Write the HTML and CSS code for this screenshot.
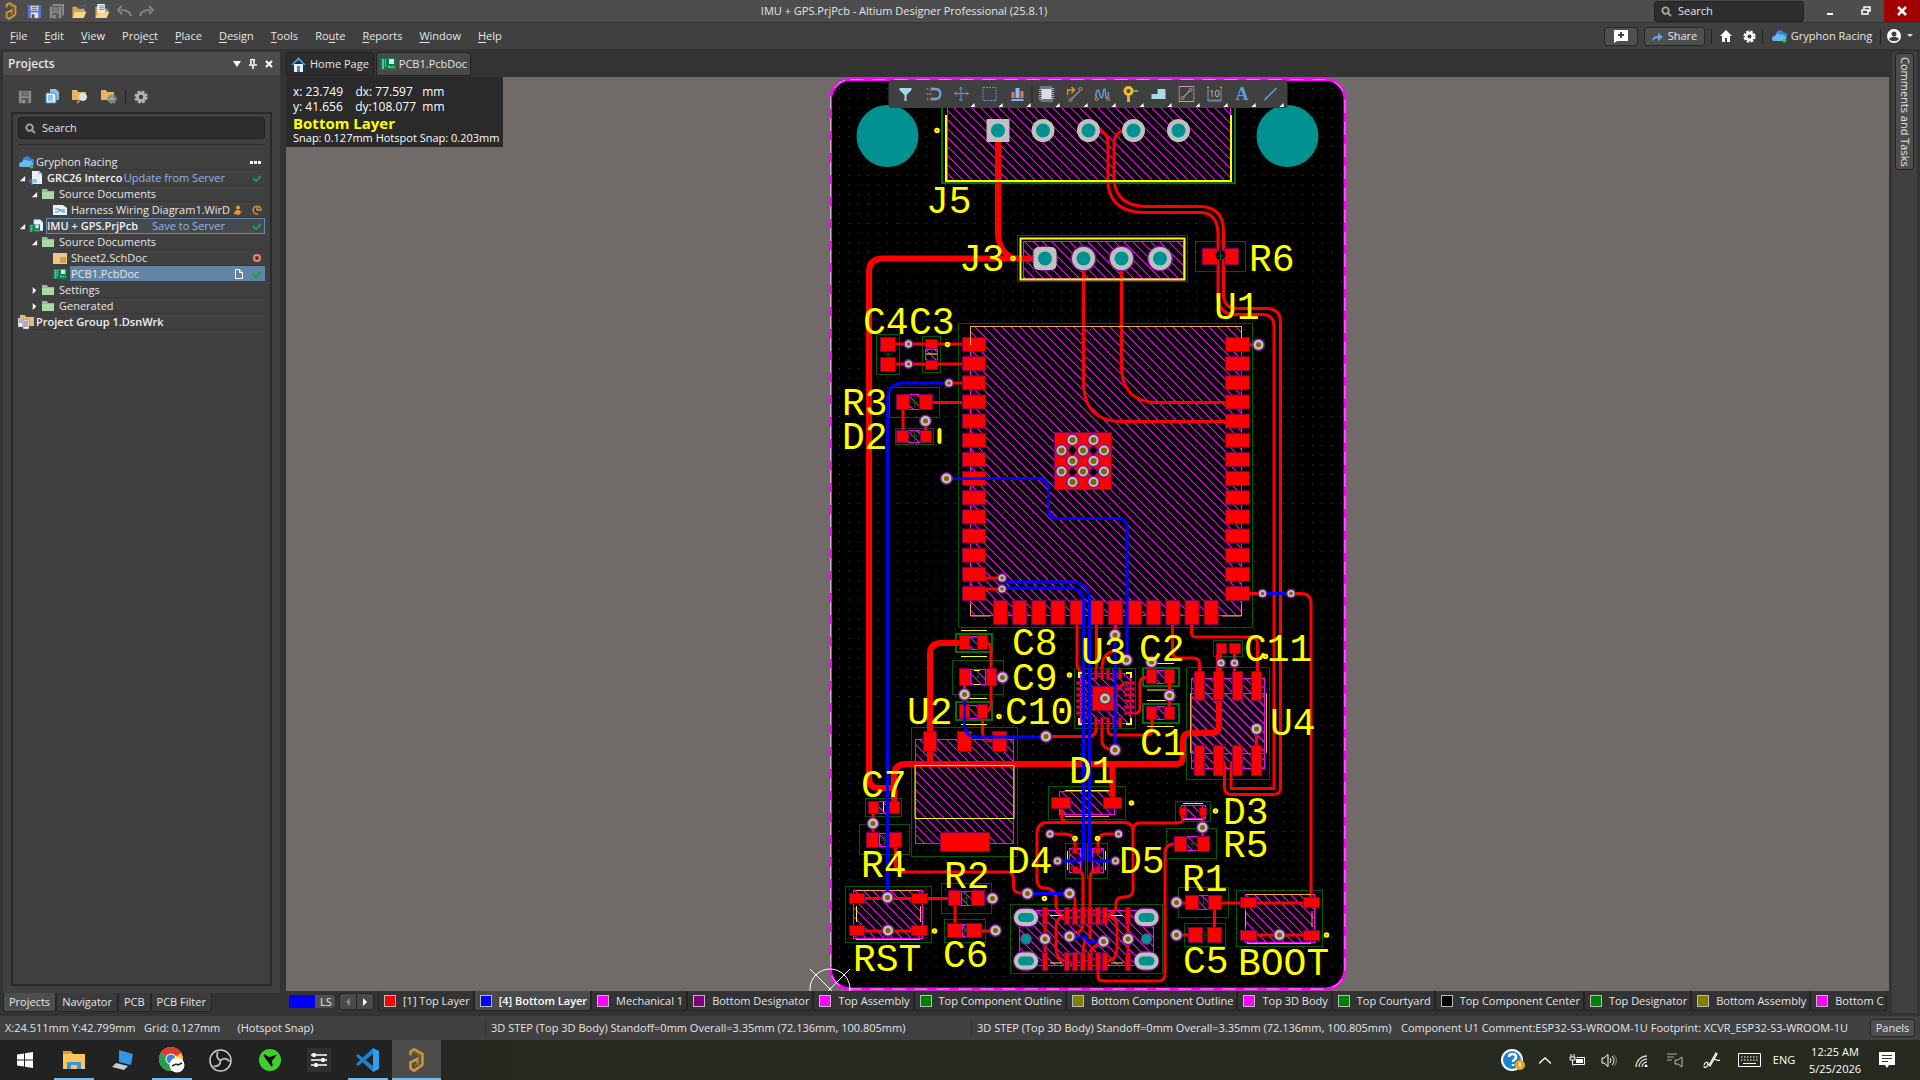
FILE: index.html
```html
<!DOCTYPE html>
<html lang="en">
<head>
  <meta charset="UTF-8">
  <meta name="viewport" content="width=device-width, initial-scale=1.0">
  <title>IMU + GPS.PrjPcb - Altium Designer</title>
  <link rel="stylesheet" href="styles.css">
</head>
<body>
  <!-- shared icons -->
  <svg class="defs" width="0" height="0">
    <symbol id="i-altium" viewBox="0 0 16 20"><path d="M3 6V3l3-2 7 4v9l-7 5-3-2v-5l6-3v5" fill="none" stroke="#c9963f" stroke-width="2.200"/><path d="M6 3l4 3v6l-4 3" fill="none" stroke="#8d6528" stroke-width="1.200"/></symbol>
    <symbol id="i-save" viewBox="0 0 16 16"><path d="M1 1h14v14H1z" fill="currentColor"/><path d="M4 2h8v5H4z" fill="#e9eef5"/><path d="M4 9h8v6H4z" fill="#dfe3ea"/><path d="M5 3h6v1H5zM5 5h6v1H5zM5 11h3v4H5z" fill="#555"/></symbol>
    <symbol id="i-save-off" viewBox="0 0 16 16"><path d="M1 1h14v14H1z" fill="#8b8b8b"/><path d="M4 2h8v5H4zM4 9h8v6H4z" fill="#555"/><path d="M5 3h6v1H5zM5 5h6v1H5zM5 11h3v4H5z" fill="#999"/></symbol>
    <symbol id="i-folder" viewBox="0 0 16 16"><path d="M1 3h5l1 2h7v3H5l-4 7z" fill="#d5a24e"/><path d="M4 8h12l-3 7H1z" fill="#fbd38c"/></symbol>
    <symbol id="i-green" viewBox="0 0 14 12"><path d="M1 1h5l1 2h6v8H1z" fill="#8fc48f"/><path d="M1 4h12v7H1z" fill="#a9d8a7"/></symbol>
    <symbol id="i-cloud" viewBox="0 0 16 14"><path d="M5 7a4 4 0 018-3 3 3 0 013 5l-2 2H7z" fill="#2c86dd"/><path d="M1 10a3 3 0 013-3 3.500 3.500 0 016-1 3 3 0 013 6H3a2 2 0 01-2-2z" fill="#70b7f0"/><circle cx="13.500" cy="11.500" r="2" fill="#37c83b"/></symbol>
    <symbol id="i-pcb" viewBox="0 0 16 12"><path d="M0 0h16v12H0z" fill="#0c7a4a"/><path d="M2 2h2M2 4h2M2 6h2M2 8h2M2 10h2M5 2h1M5 4h1M5 6h1M5 8h1" stroke="#d9f3e3"/><path d="M9 1h5v5H9z" fill="#d8e6ef"/><path d="M8 8h1v2M10 8v2M12 8v2M14 8v2" stroke="#7fe0a0" fill="none"/></symbol>
    <symbol id="i-doc" viewBox="0 0 14 14"><path d="M3 0h7l3 3v10H3z" fill="#e9f1f8"/><path d="M10 0v3h3" fill="none" stroke="#9fb9cf"/><path d="M1 8v4M3 8v6M5 8v4M7 8v4" stroke="#4c95d0"/></symbol>
    <symbol id="i-search" viewBox="0 0 12 12"><circle cx="5" cy="5" r="3.500" fill="none" stroke="#aaa" stroke-width="2"/><path d="M8 8l3 3" stroke="#aaa" stroke-width="2"/></symbol>
    <symbol id="i-gear" viewBox="0 0 14 14"><circle cx="7" cy="7" r="5" fill="none" stroke="currentColor" stroke-width="3.200" stroke-dasharray="2.600 1.330"/><circle cx="7" cy="7" r="3.600" fill="none" stroke="currentColor" stroke-width="2.800"/></symbol>
    <symbol id="i-check" viewBox="0 0 10 10"><path d="M1 5l3 3 5-5" fill="none" stroke="#17a04b" stroke-width="2"/></symbol>
    <symbol id="i-open" viewBox="0 0 8 8"><path d="M7 1v6H1z" fill="#fff"/></symbol>
    <symbol id="i-shut" viewBox="0 0 8 8"><path d="M2 0l4 4-4 4z" fill="#fff"/></symbol>
  </svg>

  <header class="titlebar">
    <div class="quick">
      <svg width="14" height="18"><use href="#i-altium"/></svg>
      <button aria-label="Save"><svg class="blue" width="15" height="15"><use href="#i-save"/></svg></button>
      <button aria-label="Save all"><svg width="15" height="15" viewBox="0 0 16 16"><path d="M4 0h12v12h-2V2H4z" fill="#8b8b8b"/><use href="#i-save-off" y="2" width="14" height="14"/></svg></button>
      <button aria-label="Open"><svg width="16" height="15" viewBox="0 0 16 16"><use href="#i-folder" width="16" height="16"/><path d="M9 2q3-2 6 1v-3" fill="none" stroke="#2f74b5"/></svg></button>
      <button aria-label="Open project"><svg width="16" height="15" viewBox="0 0 16 16"><use href="#i-folder" width="16" height="16"/><path d="M3 0h8v9H3z" fill="#eef5fb"/><path d="M5 2h5M5 4h5M5 6h5" stroke="#3b86c0"/><path d="M11 2q3-2 4 1" fill="none" stroke="#2f74b5"/></svg></button>
      <button aria-label="Undo"><svg width="15" height="12" viewBox="0 0 15 12"><path d="M14 11c-1-5-5-6-10-6M5 1L1 5l4 4" fill="none" stroke="#858585" stroke-width="2"/></svg></button>
      <button aria-label="Redo"><svg width="15" height="12" viewBox="0 0 15 12"><path d="M1 11c1-5 5-6 10-6M10 1l4 4-4 4" fill="none" stroke="#858585" stroke-width="2"/></svg></button>
    </div>
    <h1>IMU + GPS.PrjPcb - Altium Designer Professional (25.8.1)</h1>
    <label class="search title-search"><svg width="11" height="11"><use href="#i-search"/></svg><input type="text" placeholder="Search" aria-label="Search commands"></label>
    <div class="window-btns">
      <button aria-label="Minimize"><svg width="10" height="10"><path d="M2 7h6v2H2z" fill="#fff"/></svg></button>
      <button aria-label="Restore"><svg width="10" height="10" viewBox="0 0 10 10"><path d="M3 3V1h6v4H7M1 4h6v4H1z" fill="none" stroke="#fff" stroke-width="1.500"/></svg></button>
      <button class="close" aria-label="Close"><svg width="10" height="10" viewBox="0 0 10 10"><path d="M1 1l8 8M9 1L1 9" stroke="#fff" stroke-width="2.500"/></svg></button>
    </div>
  </header>

  <nav class="menubar">
    <div class="menus">
      <button><u>F</u>ile</button><button><u>E</u>dit</button><button><u>V</u>iew</button><button>Proje<u>c</u>t</button><button><u>P</u>lace</button><button><u>D</u>esign</button><button><u>T</u>ools</button><button>Ro<u>u</u>te</button><button><u>R</u>eports</button><button><u>W</u>indow</button><button><u>H</u>elp</button>
    </div>
    <div class="account">
      <button class="boxed note" aria-label="Add comment"><svg width="16" height="13" viewBox="0 0 16 13"><path d="M1 0h14v11H4l-3 2z" fill="#fff"/><path d="M8 2v6M5 5h6" stroke="#444" stroke-width="2"/></svg></button>
      <button class="boxed share"><svg width="12" height="9" viewBox="0 0 12 9"><path d="M0 9c1-4 3-5 6-5V1l5 4-5 4V6C4 6 2 7 0 9z" fill="#64a7ea"/></svg>Share</button>
      <i></i>
      <button class="home" aria-label="Home"><svg width="12" height="12" viewBox="0 0 12 12"><path d="M6 0l6 6h-2v6H7V8H5v4H2V6H0z" fill="#fff"/></svg></button>
      <button aria-label="Settings"><svg class="white" width="13" height="13"><use href="#i-gear"/></svg></button>
      <i></i>
      <button class="server"><svg width="16" height="14"><use href="#i-cloud"/></svg>Gryphon Racing</button>
      <i></i>
      <button class="user" aria-label="User"><svg width="14" height="14" viewBox="0 0 14 14"><circle cx="7" cy="7" r="7" fill="#fff"/><circle cx="7" cy="5" r="2.500" fill="#404040"/><path d="M2 10c2-3 8-3 10 0-2 3-8 3-10 0z" fill="#404040"/></svg><svg width="6" height="4"><path d="M0 0h6L3 3z" fill="#ddd"/></svg></button>
    </div>
  </nav>

  <main class="workspace">
    <aside class="side">
      <section class="panel">
        <header>
          <h2>Projects</h2>
          <button aria-label="Panel menu"><svg width="8" height="8"><path d="M0 1h8L4 7z" fill="#fff"/></svg></button>
          <button aria-label="Pin"><svg width="8" height="10" viewBox="0 0 8 10"><path d="M2 0v5M5 0v5M0 6h8M4 6v4M2 .500h4" stroke="#fff" stroke-width="1.500"/></svg></button>
          <button aria-label="Close panel"><svg width="8" height="8" viewBox="0 0 8 8"><path d="M1 1l6 6M7 1L1 7" stroke="#fff" stroke-width="2"/></svg></button>
        </header>
        <div class="panel-tools">
          <button aria-label="Save project"><svg width="14" height="14"><use href="#i-save-off"/></svg></button>
          <button aria-label="Compile"><svg width="14" height="15" viewBox="0 0 14 15"><path d="M5 0h6l3 3v8H5z" fill="#8bbfe8"/><path d="M1 4h8l2 2v8H1z" fill="#e3f0fa" stroke="#3b88c6"/><path d="M3 7h5M3 9h5M3 11h5" stroke="#4b98d0"/></svg></button>
          <button aria-label="Explore"><svg width="16" height="15" viewBox="0 0 16 15"><path d="M0 1h5l1 2h8v8H0z" fill="#e5b564"/><circle cx="11" cy="8" r="3.500" fill="#cfe4f3" stroke="#e7eef5"/><path d="M8 11l-3 3" stroke="#c58a3c" stroke-width="2"/></svg></button>
          <button aria-label="Project options"><svg width="16" height="15" viewBox="0 0 16 15"><path d="M0 1h5l1 2h7v8H0z" fill="#e5b564"/><g class="grey"><use href="#i-gear" x="6" y="5" width="10" height="10"/></g></svg></button>
          <i></i>
          <button aria-label="Panel settings"><svg class="lgrey" width="14" height="14"><use href="#i-gear"/></svg></button>
        </div>
        <div class="tree-box">
          <label class="search"><svg width="11" height="11"><use href="#i-search"/></svg><input type="text" placeholder="Search" aria-label="Search projects"></label>
          <hr>
          <ul class="tree">
            <li><svg class="root" width="16" height="14"><use href="#i-cloud"/></svg><span class="cell">Gryphon Racing<svg class="dots" width="12" height="4"><path d="M0 1h3v3H0zM4 1h3v3H4zM8 1h3v3H8z" fill="#fff"/></svg></span></li>
            <li class="l1"><svg width="7" height="7"><use href="#i-open"/></svg><svg class="ico" width="14" height="14"><use href="#i-doc"/></svg><span class="cell"><b>GRC26 Interco</b><a href="#">Update from Server</a><svg class="st" width="10" height="10"><use href="#i-check"/></svg></span></li>
            <li class="l2"><svg width="7" height="7"><use href="#i-open"/></svg><svg class="ico" width="14" height="12"><use href="#i-green"/></svg><span class="cell">Source Documents</span></li>
            <li class="l3"><svg class="ico" width="14" height="10" viewBox="0 0 14 10"><path d="M0 0h10l4 3v7H0z" fill="#eaf3fa"/><path d="M2 4h4l3 3h3M2 7h3l2-2h5" stroke="#3c8fd0" fill="none"/></svg><span class="cell"><span class="name">Harness Wiring Diagram1.WirD</span><svg class="st" width="10" height="10" viewBox="0 0 10 10"><circle cx="4" cy="2.500" r="2" fill="#e39a45"/><path d="M0 9c0-5 6-5 7-2l2-2-4 5z" fill="#e39a45"/></svg><svg class="st" width="10" height="10" viewBox="0 0 10 10"><path d="M9 6a4 4 0 10-3 3M5 2v3h3" fill="none" stroke="#d99a3d" stroke-width="1.300"/></svg></span></li>
            <li class="l1 current"><svg width="7" height="7"><use href="#i-open"/></svg><svg class="ico" width="14" height="14" viewBox="0 0 15 14"><path d="M5 0h7l3 3v9H5z" fill="#e9f1f8"/><use href="#i-pcb" y="5" width="12" height="9"/></svg><span class="cell"><b>IMU + GPS.PrjPcb</b><a href="#">Save to Server</a><svg class="st" width="10" height="10"><use href="#i-check"/></svg></span></li>
            <li class="l2"><svg width="7" height="7"><use href="#i-open"/></svg><svg class="ico" width="14" height="12"><use href="#i-green"/></svg><span class="cell">Source Documents</span></li>
            <li class="l3"><svg class="ico" width="14" height="11" viewBox="0 0 14 11"><path d="M0 0h14v11H0z" fill="#eec983"/><path d="M7 5h6M7 7h6M7 9h6" stroke="#a8782c"/></svg><span class="cell"><span class="name">Sheet2.SchDoc</span><svg class="st" width="10" height="10"><circle cx="5" cy="5" r="3" fill="none" stroke="#f4806c" stroke-width="2"/></svg></span></li>
            <li class="l3 selected"><svg class="ico" width="14" height="12"><use href="#i-pcb"/></svg><span class="cell"><span class="name">PCB1.PcbDoc</span><svg class="st" width="10" height="10" viewBox="0 0 10 10"><path d="M1.500 .500h4l3 3v6h-7zM5.500 .500v3h3" fill="none" stroke="#fff"/></svg><svg class="st" width="10" height="10"><use href="#i-check"/></svg></span></li>
            <li class="l2"><svg width="7" height="7"><use href="#i-shut"/></svg><svg class="ico" width="14" height="12"><use href="#i-green"/></svg><span class="cell">Settings</span></li>
            <li class="l2"><svg width="7" height="7"><use href="#i-shut"/></svg><svg class="ico" width="14" height="12"><use href="#i-green"/></svg><span class="cell">Generated</span></li>
            <li><svg class="root" width="16" height="14" viewBox="0 0 16 14"><path d="M2 0h5l1 2h8v9H2z" fill="#e8bb6c"/><path d="M0 3h5v9H0zM5 5h6v9H5z" fill="#eef3f8" stroke="#777" stroke-width=".500"/><path d="M6 7h4M6 9h4M6 11h4M1 5h3M1 7h3" stroke="#666"/></svg><span class="cell"><b>Project Group 1.DsnWrk</b></span></li>
          </ul>
        </div>
      </section>
      <div class="panel-tabs"><button class="on">Projects</button><button>Navigator</button><button>PCB</button><button>PCB Filter</button></div>
    </aside>

    <section class="editor">
      <div class="doc-tabs">
        <button><svg width="15" height="15" viewBox="0 0 15 15"><path d="M3 7h9v8H3z" fill="#e8f2fb"/><path d="M7.500 0L15 8h-2L7.500 3 2 8H0z" fill="#3d9bea"/><path d="M6 9h3v6H6z" fill="#3d86c8"/></svg>Home Page</button>
        <button class="on"><svg width="16" height="12"><use href="#i-pcb"/></svg>PCB1.PcbDoc</button>
      </div>

      <div class="canvas">
        <svg class="board" width="576" height="914" viewBox="800 77 576 914">
          <defs>
            <pattern id="dots" x="839" y="88" width="9.650" height="9.650" patternUnits="userSpaceOnUse"><rect width="1" height="1" fill="#505050"/></pattern>
            <pattern id="hatch" width="9" height="9" patternUnits="userSpaceOnUse"><path d="M-1-1l11 11M-1 8l2 2M8-1l2 2" stroke="#f0f" stroke-width="1.100"/></pattern>
          </defs>
          <rect x="830.500" y="79.500" width="514.500" height="909.500" rx="20"/>
          <g class="body" id="bodies"></g>
          <rect x="830.500" y="79.500" width="514.500" height="909.500" rx="20" fill="url(#dots)"/>
          <rect class="edge" x="830.500" y="79.500" width="514.500" height="909.500" rx="20"/>
          <rect class="edge-dash" x="830.500" y="79.500" width="514.500" height="909.500" rx="20"/>
          <g class="drill"><ellipse cx="887.500" cy="136" rx="31" ry="31"/><ellipse cx="1287.500" cy="136" rx="31" ry="31"/></g>

          <g class="yard" id="yards"></g>
          <g class="yard heavy"><path d="M942 95v88h293V95"/><rect x="956" y="634" width="36" height="18"/><rect x="956" y="702" width="36" height="18"/><rect x="1143" y="668" width="36" height="18"/><rect x="1143" y="704" width="36" height="19"/></g>

          <g class="cu thick">
            <path d="M998 130v105q2 20 18 23.500M1045 258.500H883q-14 0-14 14V778q0 10 10 10h15M894 806v-30q0-12 12-12h270q7 0 7-7v-16q0-8 8-8h20q8 0 8-8v-75M930 764V654q0-11 11-11h25M1112.500 764v38"/>
          </g>
          <g class="cu">
            <path d="M1099 131q9 2 9 12v41q3 28 36 28.500h56q17 0 18 20v16q-4 6 0 12v38q2 16 17 16h27q12 0 12 12v462h-43v-22q0-4 3-5"/>
            <path d="M1123 131q-9 2-9 12v38q3 24 30 25.500h57q22 1 22.500 24v18q4 6 0 12v36q2 12 13 12h30q14 0 14 14v465q0 7-7 7h-42q-7 0-7-7v-22q0-4-3-5"/>
            <path d="M1083.500 268v118q2 34 36 35.500h106M1121.500 268v102q2 31 34 32.500h70M888 344h74M888 364h74M949 383h15M932 402.500h30M903 402v30M925.500 421v12M985 578h17M985 589h17M1250 593.500h12M1291 593.500h10q10 0 10 10V900M1250 344.700h8"/>
            <path d="M1077 624v38q0 8 5 11M1096.500 624v48M1115.500 624v11M1172.500 624v27q0 7 7 7h14q6 0 6 6v12M1191.500 624v8q0 5 5 5h54q7 0 7 7v30M988 643q3 1 3 9v52q0 6-5 8M964.500 686v9M982.500 718v14q0 9 12 9M996 677h7M1046 736.500h42q8 0 8-8v-6"/>
            <path d="M1127 660q-3-8-13-9-12 2-12 18M1102 727v15q1 7 12 8M1108 727v3q0 5 5 5h34q5 0 5-6v-12M1134 713.500q6 0 6-6V682q0-5 8-5M1117 690q3-5 9-6M1151.500 662v10M1169.500 680v32M1234.500 652v22M1256.500 729v18"/>
            <path d="M873 806v36M895.500 846v19q0 7 7 7h104q7 0 7 7v7q0 7 7 7h8M1069 893q6 2 6 8v12M857 898.500h100M857 931h60M955 900v28M981 931h14M1050 834h15q10 0 10 10v6M1118 834h-12q-8 0-8 10v6"/>
            <path d="M1061.500 806v10q0 6 6 6.500M1183 814v4q0 5-6 5h-37q-7 0-7 8M1048 822.500h76q9 0 9 9V890q0 7-9 7t-8 8-8 10M1048 822.500q-11 0-11 11V880q0 8 8 8t11 8v10q2 8 9 10M1072 868q11 2 11 10v45q0 9-8 10M1101 868q-11 2-11 10v60"/>
            <path d="M1065 916q-9 1-9 12v20q0 11 9 13M1107 916q10 1 10 12v20q0 11-9 13M1045 914v50M1128 914v50M1090 956q0-11 13-12M1083 956q0-9 2-16M1098 970v6q0 5 6 5h54q7 0 7-7V852q0-7 8-8h5M1202.500 812v30M1214.500 903v30M1220 903h91M1188 935h-12M1186 903h-10M1246 935h70"/>
          </g>
          <g class="pad" id="pads"></g>
          <g class="gap"><path d="M1068 450l4-5 5 5-5 6zM1089 450l4-5 5 5-5 6zM1068 472l4-5 5 5-5 6zM1089 472l4-5 5 5-5 6z"/><circle cx="1220.500" cy="255" r="5"/></g>
          <g class="yard" id="centers"></g>

          <g class="silk">
            <path d="M946 115v66h285v-66" class="w2"/><rect class="w2" x="1020.500" y="238.500" width="164" height="41"/>
            <path d="M961 630.500h26M961 656.500h26M961 698.500h26M961 724.500h26M974 670.500h6M974 684.500h6M926 354h11M915 765.500h99v53h-99zM883.500 802v10M1155 663.500h19M1147 690h27M1147 700.500h27M1147 726.500h27M1183 803.500h20M1065 790.500h44M1067.500 851v19M1105.500 851v19M856.500 906v16M1050 915.500h12M1050 963h12M1111 915.500h12M1111 963h12"/>
            <path class="w2" d="M1079 678v-5h5M1126 673h5v5M1079 718v6h5M1126 724h5v-6"/>
            <path d="M939.500 430v12" class="w4"/>
          </g>
          <g class="orange"><path d="M970.500 345V326.500h271V338M970.500 604v12h20M1222 616h19.500v-12M856 890.500h64M856 939.500h64M920.500 906v16M1245.500 911v16M1312 911v16M1247 894.500h64M1247 943.500h64M1065 816.500h44M1183 819.500h20M1190.500 693v60M1266.500 693v60"/></g>

          <g class="cu blue">
            <path d="M949 383h-46q-15 1-15.500 15v499M946 478.500h92q10 0 10.500 10V509q0 9.500 10 9.500h59q9.500 0 9.500 9.500v132M1262 593.500h29M1002 579l5 3h66q15 1 16.500 16v262M1002 588h69q12 1 12.500 13v259"/>
            <path d="M964.500 695v31q1 10 10 11h72M1115 635v115M1027 893.500h42M1058 861h18q7-1 7.500-8M1115 861h-18q-7-1-7.500-8M1069 937h16l3 5h15"/>
          </g>
          <g id="vias"></g>
          <g id="marks" class="mark"></g>
          <g class="refdes">
            <text x="926" y="213">J5</text><text x="959" y="271">J3</text><text x="1249" y="271">R6</text><text x="1214" y="319">U1</text>
            <text x="863" y="334">C4</text><text x="909" y="334">C3</text><text x="842" y="415">R3</text><text x="842" y="449">D2</text>
            <text x="1012" y="655">C8</text><text x="1012" y="690">C9</text><text x="1005" y="724">C10</text><text x="907" y="724">U2</text>
            <text x="1081" y="664">U3</text><text x="1139" y="661">C2</text><text x="1244" y="661">C11</text><text x="1270" y="735">U4</text>
            <text x="1140" y="755">C1</text><text x="1069" y="783">D1</text><text x="861" y="797">C7</text><text x="861" y="877">R4</text>
            <text x="944" y="888">R2</text><text x="1007" y="873">D4</text><text x="1119" y="873">D5</text><text x="1223" y="824">D3</text>
            <text x="1223" y="857">R5</text><text x="1182" y="891">R1</text><text x="1183" y="973">C5</text><text x="1238" y="975">BOOT</text>
            <text x="853" y="971">RST</text><text x="943" y="967">C6</text>
          </g>
          <g class="origin"><circle cx="830" cy="989" r="20"/><path d="M810 969l40 40M850 969l-40 40"/></g>
        </svg>

        <div class="hud">
          <p>x: 23.749    dx: 77.597   mm</p>
          <p>y: 41.656    dy:108.077  mm</p>
          <strong>Bottom Layer</strong>
          <small>Snap: 0.127mm Hotspot Snap: 0.203mm</small>
        </div>

        <div class="toolbar">
          <button aria-label="Filter"><svg viewBox="0 0 16 16"><path d="M2 2h12v2l-5 5v6H7V9L2 4z" fill="#a9d8e4"/></svg></button>
          <button aria-label="Snap"><svg viewBox="0 0 16 16"><path d="M6 3h4a5 5 0 010 10H6" fill="none" stroke="#6fa5e0" stroke-width="2.500"/><path d="M5 3h2M5 13h2" stroke="#e06a6a" stroke-width="3"/><path d="M1 3h2M1 8h2M4 8h2M1 13h2" stroke="#aaa"/></svg></button>
          <button class="more" aria-label="Move"><svg viewBox="0 0 16 16"><path d="M7.500 1v14M1 7.500h14M6 3l1.500-2L9 3M6 13l1.500 2L9 13M3 6L1 7.500 3 9M13 6l2 1.500L13 9" fill="none" stroke="#5b9bd8"/></svg></button>
          <button class="more" aria-label="Select"><svg viewBox="0 0 16 16"><path d="M1.500 1.500h13v13h-13z" fill="none" stroke="#5b9bd8" stroke-dasharray="2 1"/></svg></button>
          <button class="more" aria-label="Align"><svg viewBox="0 0 16 16"><path d="M2 6h3v6H2zM11 5h3v7h-3z" fill="#d77"/><path d="M6 2h4v10H6z" fill="#8bc0ee"/><path d="M2 14h12" stroke="#7db7ea" stroke-width="2"/></svg></button>
          <i></i>
          <button class="more" aria-label="Component"><svg viewBox="0 0 16 16"><path d="M2 2h12v12H2z" fill="none" stroke="#a7a7c8" stroke-width="4" stroke-dasharray="1 1"/><path d="M3 3h10v10H3z" fill="#dcdce6"/></svg></button>
          <button class="more" aria-label="Route"><svg viewBox="0 0 16 16"><path d="M1 9V4h6M5 1l3 3-3 3" fill="none" stroke="#d9982c" stroke-width="1.500"/><path d="M5 13l8-8" stroke="#6f9cc8" stroke-width="1.500"/><circle cx="4" cy="14" r="1.500" fill="none" stroke="#d9982c"/><circle cx="14" cy="3" r="1.500" fill="none" stroke="#d9982c"/></svg></button>
          <button class="more" aria-label="Tune length"><svg viewBox="0 0 16 16"><path d="M2 12C0 7 3 4 4 4s1 8 3 8 1-9 3-9 0 9 2 9 2-3 2-6" fill="none" stroke="#6f9cc8" stroke-width="1.500"/><circle cx="2" cy="13" r="1.500" fill="none" stroke="#d9982c"/><circle cx="14" cy="13" r="1.500" fill="none" stroke="#d9982c"/></svg></button>
          <button class="more" aria-label="Via"><svg viewBox="0 0 16 16"><path d="M8 5h8" stroke="#4cb848" stroke-width="2"/><circle cx="6" cy="5" r="3.500" fill="none" stroke="#f3bd2e" stroke-width="3"/><path d="M6 9v7" stroke="#e9a735" stroke-width="3"/></svg></button>
          <button class="more" aria-label="Polygon"><svg viewBox="0 0 16 16"><path d="M1 8h6V3h8v10H1z" fill="#a9dbe8"/></svg></button>
          <button class="more" aria-label="Region"><svg viewBox="0 0 16 16"><path d="M.500 .500h15v15H.500z" fill="none" stroke="#d78fd7"/><path d="M5 11l6-6" stroke="#6f9cc8" stroke-width="1.500"/><circle cx="4" cy="12" r="1.500" fill="none" stroke="#d9982c"/><circle cx="12" cy="4" r="1.500" fill="none" stroke="#d9982c"/></svg></button>
          <button class="more" aria-label="Dimension"><svg viewBox="0 0 16 16"><path d="M1.500 3v12h13V3M2 14h12" fill="none" stroke="#8193b8"/><circle cx="1.500" cy="1.500" r="1" fill="#d9982c"/><circle cx="14.500" cy="1.500" r="1" fill="#d9982c"/><text x="8" y="11" font-size="9" text-anchor="middle" fill="#ccc">10</text></svg></button>
          <button class="more letter" aria-label="String">A</button>
          <button class="more" aria-label="Line"><svg viewBox="0 0 16 16"><path d="M2 14L14 2" stroke="#5ba3ea" stroke-width="1.500"/></svg></button>
        </div>
      </div>

      <div class="layers">
        <div class="layer-set"><span></span>LS</div>
        <div class="scroll"><button aria-label="Previous"><svg width="6" height="8"><path d="M5 0v8L1 4z" fill="#888"/></svg></button><button aria-label="Next"><svg width="6" height="8"><path d="M1 0v8l4-4z" fill="#fff"/></svg></button></div>
        <button class="layer red">[1] Top Layer</button><button class="layer navy on">[4] Bottom Layer</button><button class="layer magenta">Mechanical 1</button><button class="layer purple">Bottom Designator</button><button class="layer magenta">Top Assembly</button><button class="layer green">Top Component Outline</button><button class="layer olive">Bottom Component Outline</button><button class="layer magenta">Top 3D Body</button><button class="layer green">Top Courtyard</button><button class="layer black">Top Component Center</button><button class="layer green">Top Designator</button><button class="layer olive">Bottom Assembly</button><button class="layer magenta">Bottom C</button>
      </div>
    </section>

    <aside class="right"><button>Comments and Tasks</button></aside>
  </main>

  <footer class="status">
    <span>X:24.511mm Y:42.799mm   Grid: 0.127mm      (Hotspot Snap)</span>
    <span>3D STEP (Top 3D Body) Standoff=0mm Overall=3.35mm (72.136mm, 100.805mm)</span>
    <span>3D STEP (Top 3D Body) Standoff=0mm Overall=3.35mm (72.136mm, 100.805mm)</span>
    <span>Component U1 Comment:ESP32-S3-WROOM-1U Footprint: XCVR_ESP32-S3-WROOM-1U</span>
    <button>Panels</button>
  </footer>

  <footer class="taskbar">
    <div class="apps">
      <button aria-label="Start"><svg width="16" height="16" viewBox="0 0 16 16"><path d="M0 2.500L7 1.500v6H0zM8 1.300L16 0v7.500H8zM0 8.500h7v6l-7-1zM8 8.500h8V16l-8-1.300z" fill="#fff"/></svg></button>
      <button class="run" aria-label="File Explorer"><svg width="22" height="19" viewBox="0 0 22 19"><path d="M0 1h8l2 2h12v15H0z" fill="#f9c65e"/><path d="M0 0h8l2 3H0z" fill="#e8a018"/><path d="M4 18v-7h14v7h-4v-4H8v4z" fill="#3d94dc"/></svg></button>
      <button aria-label="Remote Desktop"><svg width="22" height="20" viewBox="0 0 22 20"><path d="M7 0l14 4-2 11-12-3z" fill="#3494e6"/><path d="M4 13l12 3-4 4-12-3z" fill="#c8ccd0"/></svg></button>
      <button class="run" aria-label="Chrome"><svg width="26" height="26" viewBox="0 0 26 26"><circle cx="12" cy="12" r="12" fill="#f8c72c"/><path d="M12 12L1.600 6A12 12 0 0122.400 6z" fill="#dc3b2e"/><path d="M12 12L1.600 6A12 12 0 0012 24l4-8z" fill="#2b9e4d"/><circle cx="12" cy="12" r="5.500" fill="#fff"/><circle cx="12" cy="12" r="4.500" fill="#3d7fe0"/><circle cx="18" cy="18" r="7.500" fill="#fff"/><path d="M13 19l4-2 2 1 4-2" fill="none" stroke="#222" stroke-width="1.500"/></svg></button>
      <button aria-label="OBS"><svg width="23" height="23" viewBox="0 0 23 23"><circle cx="11.500" cy="11.500" r="10.500" fill="#1b1b1b" stroke="#ccc" stroke-width="1.500"/><path d="M11.500 11.500C8 10 7 6 9 3M11.500 11.500c3-3 7-2 9 1M11.500 11.500c0 4-3 6-7 6" fill="none" stroke="#bbb" stroke-width="1.800"/></svg></button>
      <button aria-label="Razer"><svg width="22" height="22" viewBox="0 0 22 22"><circle cx="11" cy="11" r="11" fill="#3fd02f"/><path d="M5 6l5 3 6-2-4 5 1 5-3-4z" fill="#111" stroke="#111" stroke-width="1.500"/></svg></button>
      <button aria-label="Mixer"><svg width="24" height="24" viewBox="0 0 24 24"><path d="M0 0h24v24H0z" fill="#303030"/><path d="M4 7h16M4 12h16M4 17h16" stroke="#fff" stroke-width="1.500"/><path d="M7 5v4M16 10v4M9 15v4" stroke="#fff" stroke-width="3"/></svg></button>
      <button class="run" aria-label="Visual Studio Code"><svg width="24" height="24" viewBox="0 0 24 24"><path d="M17 0l6 3v18l-6 3z" fill="#2f9fee"/><path d="M17 6v12L2 6l-2 2 17 16V0L0 16l2 2z" fill="#1f82cf"/></svg></button>
      <button class="run active" aria-label="Altium Designer"><svg width="19" height="24"><use href="#i-altium"/></svg></button>
    </div>
    <div class="tray">
      <button aria-label="Help"><svg width="24" height="22" viewBox="0 0 24 22"><circle cx="11" cy="11" r="10" fill="#1c83cf" stroke="#fff" stroke-width="2"/><path d="M8 8c0-4 7-4 7 0 0 3-3 2-3 5M12 15v2" fill="none" stroke="#fff" stroke-width="2.500"/><circle cx="19" cy="16" r="5" fill="#f2a31c"/><path d="M19 13v5" stroke="#fff" stroke-width="1.500"/></svg></button>
      <button aria-label="Show hidden icons"><svg width="12" height="7" viewBox="0 0 12 7"><path d="M0 6.500L6 1l6 5.500" fill="none" stroke="#fff" stroke-width="1.300"/></svg></button>
      <button aria-label="Battery"><svg width="17" height="13" viewBox="0 0 17 13"><path d="M2 0v3M5 0v3M1 3h5v3H1zM3.500 6v5H5" stroke="#fff" fill="none"/><path d="M7.500 3.500h8v7H5" stroke="#fff" fill="none"/><path d="M7 5h7v4H7z" fill="#fff"/></svg></button>
      <button aria-label="Volume"><svg width="17" height="13" viewBox="0 0 17 13"><path d="M1 4h2l4-3.500v12L3 9H1zM9 4q2 2.500 0 5M11 2q4 4.500 0 9" fill="none" stroke="#fff"/><path d="M13 1q5 5.500 0 11" fill="none" stroke="#888"/></svg></button>
      <button aria-label="Network"><svg width="14" height="13" viewBox="0 0 14 13"><path d="M2 13A11 11 0 0113 2M5 13a8 8 0 018-8M8 13a5 5 0 015-5" fill="none" stroke="#ccc" stroke-width="1.300"/><circle cx="12" cy="12" r="1.500" fill="#fff"/></svg></button>
      <button class="wide" aria-label="Audio"><svg width="17" height="15" viewBox="0 0 17 15"><path d="M0 1h10M0 4h7M0 7h5" stroke="#aaa"/><path d="M8 7h3l4-3v10l-4-3H8z" fill="none" stroke="#bbb"/></svg></button>
      <button class="wide" aria-label="Pen"><svg width="17" height="17" viewBox="0 0 17 17"><path d="M1 13c1-3 4-4 4-1s-4 5-4 2M6 13L13 1l1 1-7 12zM10 8c4-2 4 2 7 0" fill="none" stroke="#fff" stroke-width="1.200"/></svg></button>
      <button class="keys" aria-label="Keyboard"><svg width="23" height="14" viewBox="0 0 23 14"><path d="M.500 .500h22v13H.500z" fill="none" stroke="#fff"/><path d="M3 4h17M3 7h17" stroke="#fff" stroke-dasharray="1.500 1.500"/><path d="M5 10.500h13" stroke="#fff"/></svg></button>
      <button class="lang">ENG</button>
      <button class="clock"><time>12:25 AM</time><time>5/25/2026</time></button>
      <button class="bell" aria-label="Notifications"><svg width="16" height="16" viewBox="0 0 16 16"><path d="M0 0h16v13h-6l-2 3-2-3H0z" fill="#fff"/><path d="M3 3.500h10M3 6.500h10M3 9.500h6" stroke="#333"/></svg></button>
    </div>
  </footer>

  <script src="board.js"></script>
</body>
</html>
```
FILE: styles.css
```css
* {
  box-sizing: border-box;
}
body {
  margin: 0;
  height: 100vh;
  display: flex;
  flex-direction: column;
  overflow: hidden;
  background: #333;
  color: #e6e6e6;
  font: 11px/16px "Open Sans", "Noto Sans", sans-serif;
}
button, input {
  font: inherit;
  color: inherit;
  background: none;
  border: none;
  padding: 0;
  margin: 0;
}
button {
  display: flex;
  align-items: center;
  justify-content: center;
  white-space: nowrap;
}
svg {
  flex: none;
}
h1, h2, p, ul {
  margin: 0;
  padding: 0;
  font-size: inherit;
}
.defs {
  position: absolute;
}
.blue { color: #5a76c8; }
.grey { color: #8b8b8b; }
.lgrey { color: #b4b4b4; }
.white { color: #fff; }

/* title bar */
.titlebar {
  display: flex;
  align-items: center;
  height: 23px;
  background: #4d4d4d;
  border-bottom: 1px solid #333;
}
.quick {
  display: flex;
  align-items: center;
  gap: 7px;
  padding-left: 4px;
}
.quick > svg {
  margin-right: 2px;
}
.titlebar h1 {
  flex: 1;
  text-align: center;
  font-weight: 400;
}
.search {
  display: flex;
  align-items: center;
  gap: 6px;
  height: 21px;
  padding: 0 6px;
  background: #2d2d2d;
  border: 1px solid #222;
  border-radius: 3px;
}
.search input {
  flex: 1;
  min-width: 0;
}
.search input::placeholder {
  color: #e6e6e6;
}
.title-search {
  width: 150px;
}
.window-btns {
  display: flex;
  padding-left: 8px;
}
.window-btns button {
  width: 36px;
  height: 22px;
}
.window-btns .close {
  background: #a30000;
}

/* menu bar */
.menubar {
  display: flex;
  justify-content: space-between;
  height: 26px;
  padding: 0 7px 0 2px;
  background: #404040;
}
.menus, .account {
  display: flex;
  align-items: center;
}
.menus {
  gap: 1px;
}
.menus button {
  padding: 0 8px;
}
.menus u {
  text-underline-offset: 2px;
}
.account {
  gap: 6px;
}
.account i, .panel-tools i {
  width: 1px;
  height: 15px;
  background: #222;
}
.account button {
  gap: 4px;
}
.boxed {
  height: 19px;
  background: #4f4f4f;
  border: 1px solid #262626;
  border-radius: 3px;
}
.note {
  width: 34px;
}
.share {
  width: 61px;
}
.account .home {
  margin: 0 5px 0 2px;
}
.account .server {
  width: 105px;
}
.account .user {
  gap: 6px;
}

/* workspace */
.workspace {
  flex: 1;
  min-height: 0;
  display: flex;
  padding: 3px 3px 0;
}
.side {
  width: 277px;
  margin-right: 6px;
  display: flex;
  flex-direction: column;
}
.panel {
  flex: 1;
  display: flex;
  flex-direction: column;
  background: #404040;
}
.panel > header {
  display: flex;
  align-items: center;
  gap: 8px;
  height: 23px;
  padding: 0 7px 0 5px;
  background: #4d4d4d;
}
.panel h2 {
  flex: 1;
  font-weight: 600;
  font-size: 12px;
}
.panel-tools {
  display: flex;
  align-items: center;
  gap: 13px;
  height: 37px;
  padding: 6px 0 0 15px;
}
.panel-tools i {
  margin: 0 -5px;
}
.tree-box {
  flex: 1;
  margin: 0 8px 7px;
  padding: 3px 5px;
  border: 2px solid #2a2a2a;
}
.tree-box hr {
  height: 1px;
  margin: 5px 0 9px;
  border: none;
  background: #2a2a2a;
}
.tree-box .search {
  height: 22px;
}
.tree {
  list-style: none;
}
.tree li {
  display: flex;
  align-items: center;
  height: 16px;
}
.tree .root {
  margin-right: 1px;
}
.tree .ico {
  margin: 0 3px;
}
.l1 { padding-left: 1px; }
.l2 { padding-left: 13px; }
.l3 { padding-left: 32px; }
.tree .cell {
  flex: 1;
  min-width: 0;
  display: flex;
  align-items: center;
  height: 16px;
  padding: 0 3px 0 1px;
  white-space: nowrap;
  border-bottom: 1px solid #373737;
}
.tree b {
  font-weight: 600;
  color: #f2f2f2;
}
.tree .dots {
  margin-left: auto;
}
.tree a {
  margin-left: auto;
  color: #8db7e8;
  text-decoration: none;
}
.tree a + .st {
  margin-left: 27px;
}
.name {
  flex: 1;
}
.name + .st + .st {
  margin-left: 8px;
}
.tree .current .cell {
  border: 1px solid #6788a8;
  background: #464a4e;
  padding: 0 2px 0 0;
}
.tree .selected .cell {
  background: #6484a5;
}
.panel-tabs {
  display: flex;
  align-items: flex-start;
  height: 23px;
}
.panel-tabs button {
  height: 19px;
  padding: 0 5px;
  background: #3a3a3a;
  border: 1px solid #272727;
  border-top: none;
  border-radius: 0 0 3px 3px;
}
.panel-tabs .on {
  background: #4d4d4d;
}

/* editor */
.editor {
  flex: 1;
  min-width: 0;
  display: flex;
  flex-direction: column;
}
.doc-tabs {
  display: flex;
  gap: 2px;
  height: 25px;
}
.doc-tabs button {
  gap: 4px;
  height: 24px;
  padding: 0 4px;
  background: #2d2d2d;
  border: 1px solid #222;
  border-radius: 4px 4px 0 0;
}
.doc-tabs .on {
  gap: 3px;
  padding: 0 3px;
  background: #484848;
}
.canvas {
  position: relative;
  flex: 1;
  min-height: 0;
  display: flex;
  justify-content: center;
  overflow: hidden;
  background: #706b69;
}
.hud {
  position: absolute;
  top: 0;
  left: 0;
  width: 217px;
  height: 70px;
  padding: 7px 0 0 7px;
  background: #2a2a2a;
  color: #fff;
}
.hud p {
  font-size: 12px;
  line-height: 15px;
  white-space: pre;
}
.hud strong {
  display: block;
  font-size: 15px;
  line-height: 18px;
  color: #ff0;
}
.hud small {
  display: block;
  font-size: 11px;
  line-height: 12px;
  white-space: nowrap;
}
.toolbar {
  position: absolute;
  top: 3px;
  left: 50%;
  transform: translateX(-50%);
  display: flex;
  height: 28px;
  padding: 0 3px;
  background: #404040;
  border-radius: 3px;
}
.toolbar button {
  position: relative;
  width: 28px;
}
.toolbar svg {
  width: 16px;
  height: 16px;
}
.toolbar i {
  width: 1px;
  height: 18px;
  margin-top: 5px;
  background: #222;
}
.toolbar .more::after {
  content: "";
  position: absolute;
  right: 1px;
  bottom: 1px;
  border: 2px solid #fff;
  border-top-color: transparent;
  border-left-color: transparent;
}
.toolbar .letter {
  font: bold 18px "Liberation Serif", serif;
  color: #5b9fe6;
}

/* board drawing */
.edge { fill: none; stroke: #f0f; stroke-width: 3; }
.edge-dash { fill: none; stroke: #e3a9e3; stroke-width: 1; stroke-dasharray: 13 9; }
.drill { fill: #009191; }
.body { fill: url(#hatch); stroke: #f0f; }
.yard { fill: none; stroke: #005a00; }
.yard.heavy { stroke: #007000; stroke-width: 2; }
.cu { fill: none; stroke: #f00; stroke-width: 3; stroke-linecap: round; }
.cu.thick { stroke-width: 6; }
.cu.blue { stroke: #00f; stroke-width: 3; }
.pad { fill: #f00; stroke: #800050; }
.gap { fill: #000; stroke: #800080; }
.silk { fill: none; stroke: #ff0; }
.silk .w2 { stroke-width: 2; }
.silk .w4 { stroke-width: 4; stroke-linecap: round; }
.orange { fill: none; stroke: #f5a742; }
.mark { fill: #a60; stroke: #ff0; stroke-width: 2; }
.halo { fill: #7a1b8a; }
.ring { fill: #c0c0c0; }
.hole { fill: #856000; }
.refdes { fill: #ff0; font: 38px "Liberation Mono", monospace; }
.origin { fill: none; stroke: #fff; }

/* layer tabs */
.layers {
  display: flex;
  align-items: flex-start;
  height: 25px;
  overflow: hidden;
}
.layer {
  flex: none;
  height: 20px;
  gap: 7px;
  padding: 0 3px 0 5px;
  border: 1px solid #222;
  border-top: none;
  border-radius: 0 0 3px 3px;
}
.layer::before {
  content: "";
  width: 10px;
  height: 10px;
  border: 1px solid #bbb;
  background: var(--c);
}
.layer.on {
  background: #4a4a4a;
  font-weight: 600;
  color: #fff;
}
.red { --c: #f00; }
.navy { --c: #00f; }
.magenta { --c: #f0f; }
.purple { --c: #800080; }
.green { --c: #008000; }
.olive { --c: #808000; }
.black { --c: #000; }
.layer-set {
  flex: none;
  display: flex;
  align-items: center;
  gap: 5px;
  width: 46px;
  height: 13px;
  margin: 4px 4px 0 3px;
  background: #4f4f4f;
  border-radius: 3px;
}
.layer-set span {
  width: 26px;
  height: 13px;
  background: #00f;
}
.scroll {
  flex: none;
  display: flex;
  width: 35px;
  height: 17px;
  margin: 2px 4px 0 0;
  background: #4a4a4a;
  border: 1px solid #262626;
  border-radius: 3px;
}
.scroll button {
  flex: 1;
}
.scroll button + button {
  border-left: 1px solid #262626;
}

.right {
  width: 25px;
  margin: 0 0 3px 3px;
  padding: 1px 3px;
  background: #404040;
}
.right button {
  writing-mode: vertical-rl;
  width: 19px;
  height: 117px;
  background: #4d4d4d;
  border: 1px solid #222;
  border-radius: 3px;
}

/* status bar */
.status {
  display: grid;
  grid-template-columns: 485fr 486fr 425fr 474fr 50px;
  align-items: center;
  height: 24px;
  background: #404040;
  white-space: pre;
}
.status span {
  min-width: 0;
  padding-left: 5px;
}
.status span + span {
  border-left: 1px solid #2c2c2c;
}
.status span:nth-child(4) {
  border: none;
}
.status button {
  width: 45px;
  height: 18px;
  background: #4f4f4f;
  border: 1px solid #262626;
  border-radius: 3px;
}

/* taskbar */
.taskbar {
  display: flex;
  justify-content: space-between;
  height: 40px;
  background: linear-gradient(90deg, #222 20%, #262a1f 27%);
  color: #fff;
}
.apps, .tray {
  display: flex;
}
.apps button {
  position: relative;
  width: 49px;
}
.apps .run::after {
  content: "";
  position: absolute;
  left: 5px;
  right: 4px;
  bottom: 0;
  height: 2px;
  background: #76b9ed;
}
.apps .active {
  background: #4c4c4a;
}
.apps .active::after {
  left: 0;
  right: 0;
}
.tray button {
  width: 32px;
}
.tray .wide {
  width: 36px;
}
.tray .keys {
  width: 40px;
}
.tray .lang {
  width: 30px;
}
.tray .clock {
  width: 72px;
  flex-direction: column;
  line-height: 17px;
}
.tray .bell {
  margin-right: 17px;
}
```
FILE: board.js
```js
const NS = 'http://www.w3.org/2000/svg';

function add(parent, tag, attrs) {
  const el = document.createElementNS(NS, tag);
  for (const key in attrs) el.setAttribute(key, attrs[key]);
  document.getElementById(parent).appendChild(el);
}

// left, top, right, bottom
function box(parent, [x1, y1, x2, y2], rx) {
  add(parent, 'rect', { x: x1 + 0.5, y: y1 + 0.5, width: x2 - x1 - 1, height: y2 - y1 - 1, rx: rx || 0 });
}

const bodies = [
  [947, 95, 1231, 181], [1023, 241, 1184, 279], [970, 326, 1242, 616], [925, 349, 938, 361],
  [909, 394, 920, 410], [908, 430, 921, 443], [962, 636, 986, 650], [970, 669, 986, 685],
  [962, 705, 986, 719], [915, 739, 1014, 844], [1080, 673, 1131, 724], [1147, 670, 1175, 684],
  [1147, 706, 1175, 720], [1191, 678, 1265, 769], [1191, 693, 1265, 754], [1059, 791, 1115, 815],
  [870, 801, 898, 814], [879, 833, 890, 847], [853, 890, 923, 939], [961, 891, 972, 906],
  [1019, 910, 1154, 966], [1069, 848, 1081, 873], [1092, 848, 1104, 873], [1181, 805, 1206, 819],
  [1186, 836, 1198, 851], [1198, 895, 1209, 910], [1245, 894, 1315, 943], [962, 924, 967, 937]
];

const yards = [
  [1017, 235, 1188, 282], [1195, 241, 1246, 272], [958, 323, 1253, 628], [876, 334, 900, 375],
  [922, 336, 941, 373], [889, 387, 940, 418], [895, 428, 934, 445], [952, 660, 1004, 695],
  [911, 727, 1018, 857], [1074, 668, 1136, 729], [1213, 640, 1243, 657], [1186, 667, 1270, 780],
  [1048, 786, 1126, 820], [865, 798, 902, 817], [859, 824, 910, 855], [845, 886, 932, 943],
  [941, 883, 992, 914], [944, 919, 986, 943], [1010, 904, 1163, 974], [1065, 843, 1086, 879],
  [1087, 843, 1108, 879], [1175, 801, 1211, 822], [1166, 828, 1217, 859], [1178, 887, 1229, 918],
  [1184, 923, 1226, 947], [1236, 890, 1323, 947]
];

const pads = [
  [1202, 248, 1218, 265], [1224, 248, 1239, 265],
  [880, 337, 896, 352], [880, 357, 896, 372], [925, 339, 938, 349], [925, 360, 938, 370],
  [896, 394, 910, 410], [919, 394, 933, 410], [896, 430, 909, 443], [920, 430, 932, 443],
  [1054, 432, 1112, 490],
  [959, 635, 970, 650], [977, 635, 988, 650], [959, 668, 970, 686], [986, 668, 997, 686],
  [959, 704, 970, 719], [977, 704, 988, 719],
  [923, 731, 937, 752], [957, 731, 972, 752], [992, 731, 1007, 752], [940, 832, 990, 852],
  [868, 801, 879, 814], [889, 801, 900, 814], [866, 832, 879, 848], [889, 832, 902, 848],
  [849, 893, 865, 904], [911, 893, 928, 904], [849, 925, 865, 936], [911, 925, 928, 936],
  [948, 890, 961, 906], [971, 890, 985, 906], [947, 923, 962, 938], [966, 923, 982, 938],
  [1092, 686, 1118, 711],
  [1146, 669, 1157, 684], [1164, 669, 1175, 684], [1146, 706, 1157, 720], [1164, 706, 1175, 720],
  [1216, 643, 1227, 654], [1229, 643, 1241, 654],
  [1051, 797, 1071, 809], [1103, 797, 1122, 809],
  [1072, 847, 1078, 854], [1072, 866, 1078, 874], [1095, 847, 1101, 854], [1095, 866, 1101, 874],
  [1179, 807, 1187, 816], [1199, 807, 1207, 816], [1174, 836, 1187, 852], [1197, 836, 1210, 852],
  [1185, 895, 1199, 910], [1208, 895, 1222, 910], [1188, 927, 1203, 943], [1207, 927, 1222, 943],
  [1240, 897, 1257, 908], [1303, 897, 1320, 908], [1240, 930, 1257, 941], [1303, 930, 1320, 941]
];

// U1 module: 14 pads on each side, 12 along the bottom
for (let i = 0; i < 14; i++) {
  const y = 337 + i * 19.15;
  pads.push([962, y, 986, y + 15], [1225, y, 1250, y + 15]);
}
for (let i = 0; i < 12; i++) {
  const x = 993 + i * 19.15;
  pads.push([x, 600, x + 15, 625]);
}
// U3 QFN
for (let i = 0; i < 6; i++) {
  const n = i * 6;
  pads.push([1076, 681 + n, 1087, 685 + n], [1124, 681 + n, 1135, 685 + n]);
  pads.push([1088 + n, 669, 1092 + n, 680], [1088 + n, 717, 1092 + n, 728]);
}
// U4
for (let i = 0; i < 4; i++) {
  const x = 1194 + i * 19;
  pads.push([x, 671, x + 11, 701], [x, 745, x + 11, 776]);
}
// USB connector
[1045, 1067, 1075, 1083, 1090, 1098, 1105, 1128].forEach(x => {
  pads.push([x - 3, 907, x + 3, 925], [x - 3, 952, x + 3, 971]);
});

bodies.forEach(b => box('bodies', b));
yards.forEach(b => box('yards', b));
pads.forEach(b => box('pads', b));

// component centers
[[1220.5, 256], [888, 354], [931.5, 354], [914.5, 402], [914.5, 436], [978, 677],
 [884.5, 840], [966.5, 898], [964.5, 931], [1192, 844], [1203.5, 903], [1205, 935]
].forEach(([x, y]) => add('centers', 'path', { d: `M${x - 4} ${y}h8M${x} ${y - 5}v10` }));

function via(x, y, r, hole) {
  add('vias', 'circle', { cx: x, cy: y, r: r + 1.5, class: 'halo' });
  add('vias', 'circle', { cx: x, cy: y, r: r, class: 'ring' });
  add('vias', 'circle', { cx: x, cy: y, r: hole, class: 'hole' });
}

// small vias
[[908.5, 344], [908.5, 364], [949, 383], [1002, 578], [1002, 589], [1262.5, 593.5], [1291, 593.5],
 [1221, 663], [1234.5, 663], [1050, 834], [1118.5, 834], [1057.5, 861], [1115.5, 861]
].forEach(([x, y]) => via(x, y, 3.6, 1.8));

// standard vias
[[1258.5, 344.7], [925.5, 421], [946.5, 478.5], [1002.5, 677.5], [964.5, 694.5], [1046, 736.5],
 [1115, 635], [1126.5, 660], [1105, 698.5], [1115, 750], [1151.5, 662], [1169.5, 695.5],
 [1256.5, 729], [873, 823.5], [887.5, 897.5], [888, 930.5], [992.5, 898.5], [995.5, 930.5],
 [1027.5, 893.5], [1069.5, 893.5], [1045, 939], [1128, 939], [1069.5, 936.5], [1103.5, 941.5],
 [1202.5, 827.5], [1176.5, 902.5], [1176.5, 935], [1279.5, 935]
].forEach(([x, y]) => via(x, y, 5, 2.5));

// thermal vias under U1
[[1072.5, 440], [1093.5, 440], [1061.5, 450.5], [1083, 450.5], [1104, 450.5], [1072.5, 461],
 [1093.5, 461], [1061.5, 471.5], [1083, 471.5], [1104, 471.5], [1072.5, 482], [1093.5, 482]
].forEach(([x, y]) => via(x, y, 5, 3));

// through-hole pins
function pin(x, y, square) {
  if (square) add('vias', 'rect', { x: x - 11.5, y: y - 11.5, width: 23, height: 23, rx: square, class: 'ring' });
  else add('vias', 'circle', { cx: x, cy: y, r: 11.5, class: 'ring' });
  add('vias', 'circle', { cx: x, cy: y, r: 7, class: 'drill' });
}
[998, 1043, 1088.5, 1133.5, 1178.5].forEach((x, i) => pin(x, 130.5, i ? 0 : 1));
[1045, 1083.5, 1121.5, 1160].forEach((x, i) => {
  add('vias', 'circle', { cx: x, cy: 258.5, r: 13, class: 'halo' });
  pin(x, 258.5, i ? 0 : 5);
});
[[1026, 917.5], [1146.5, 917.5], [1026, 961], [1146.5, 961]].forEach(([x, y]) => {
  add('vias', 'rect', { x: x - 13, y: y - 10, width: 26, height: 20, rx: 10, class: 'halo' });
  add('vias', 'rect', { x: x - 12, y: y - 8.5, width: 24, height: 17, rx: 8.5, class: 'ring' });
  add('vias', 'rect', { x: x - 8, y: y - 4.5, width: 16, height: 9, rx: 4.5, class: 'drill' });
});
[1026, 1146.5].forEach(x => {
  add('vias', 'circle', { cx: x, cy: 939, r: 6, class: 'halo' });
  add('vias', 'circle', { cx: x, cy: 939, r: 5, class: 'drill' });
});

// pin 1 marks
[[937, 130.5], [1013, 258.5], [947.5, 344.5], [999, 716.5], [1069.5, 675], [1265.5, 656.5],
 [1131.5, 803], [934.5, 931], [1044.5, 898.5], [1075, 838.5], [1097.5, 838.5], [1215.5, 811], [1326.5, 935]
].forEach(([x, y]) => add('marks', 'circle', { cx: x, cy: y, r: 1.8 }));
```
